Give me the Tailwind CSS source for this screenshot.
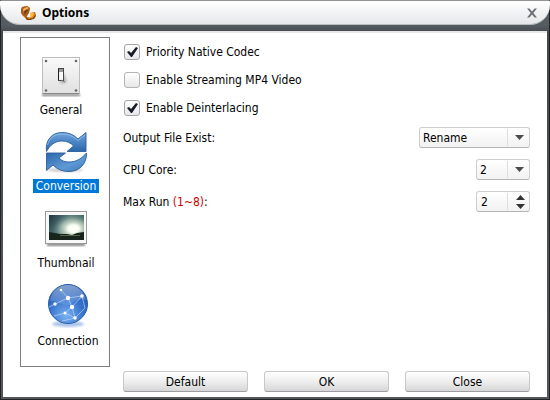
<!DOCTYPE html>
<html lang="en">
<head>
<meta charset="utf-8">
<title>Options</title>
<script src="https://cdn.jsdelivr.net/npm/@tailwindcss/browser@4"></script>
</head>
<body class="font-['DejaVu_Sans_Condensed','Noto_Sans',sans-serif] text-xs leading-4 text-black">
<div class="flex min-h-screen flex-col border-x border-t border-b border-x-[#232427] border-t-[#929292] border-b-[#232427] bg-linear-to-b from-[#565d62] from-[24px] via-[#44494e] via-[32px] to-[#55565a] px-[2px] pb-[2px]">
  <header class="-mx-[3px] mb-[6px] flex h-6 items-center rounded-b-[20px] border-b border-[#b9bcbf] bg-linear-to-b from-white to-[#e5e7ea] pr-2 pl-5">
    <svg class="size-4" viewBox="0 0 16 16" aria-hidden="true">
      <defs><linearGradient id="gold" x1="0" y1="0" x2="1" y2="1"><stop offset="0" stop-color="#f0b45b"/><stop offset=".5" stop-color="#c66d13"/><stop offset="1" stop-color="#64300a"/></linearGradient></defs>
      <path d="M2 2 7 1l3 2-1 4-3 2 1 3 4 1 3-2-1-3 2-1 1 4-2 3-5 1-5-3-2-4Z" fill="url(#gold)"/>
      <path d="m1 4 1-2 5-1 3 2-1 5-2 3-1 1-3-1-2-3Z" fill="#a85c18"/>
      <path d="m3 4 4-2 2 1-4 2-1 3Z" fill="#f5b860"/>
      <path d="m4 6 3-1 1 1-2 1-1 3Z" fill="#6b350d"/>
      <path d="m10 8 4-1 1 3-3 4-5 1-2-2 4 0 3-2Z" fill="#e58a16"/>
      <path d="m11 8 3 0-1 3-2 1-1-1Z" fill="#ffb538"/>
      <path d="m5 12 4 2 4-1-2 2H7Z" fill="#7a400e"/>
    </svg>
    <h1 class="ml-[6px] flex-1 font-['Noto_Sans',sans-serif] font-bold">Options</h1>
    <button class="p-1" aria-label="Close window"><svg class="h-[10px] w-[12px]" viewBox="0 0 12 10"><path d="M1 .5h2.500L6 3.500 8.500.5H11L7.300 5 11 9.500H8.500L6 6.500 3.500 9.500H1L4.700 5Z" fill="#6d7176"/></svg></button>
  </header>

  <main class="flex flex-1 border-t-2 border-[#e5e7e9] bg-white pr-[17px] pb-[5px] pl-[17px]">
    <nav class="mt-1 mb-[25px] flex w-[90px] flex-none flex-col items-start border border-[#7b7d80] px-3 pt-[18px]" aria-label="Option categories">
      <button class="flex h-[75px] w-[56px] flex-col items-center">
        <svg class="h-[42px] w-10" viewBox="0 0 40 42" aria-hidden="true">
          <defs><linearGradient id="plate" x1="0" y1="0" x2="0" y2="1"><stop offset="0" stop-color="#fafafa"/><stop offset="1" stop-color="#e0e0e1"/></linearGradient><filter id="soft"><feGaussianBlur stdDeviation="1"/></filter></defs>
          <path d="M1 38h38v2H1z" fill="#777" filter="url(#soft)"/>
          <rect x="1.500" y="1.500" width="37" height="36" fill="url(#plate)" stroke="#bcbdbe"/>
          <path d="M2 37.500h36" stroke="#888"/>
          <g fill="#666"><circle cx="5" cy="5" r="1.300"/><circle cx="35" cy="5" r="1.300"/><circle cx="5" cy="34.500" r="1.300"/><circle cx="35" cy="34.500" r="1.300"/></g>
          <path d="m18 25 5-8 3 9-5 2Z" fill="#888" opacity=".5" filter="url(#soft)"/>
          <rect x="17.500" y="12.500" width="5" height="12" fill="#eee" stroke="#444"/>
          <path d="M18 13h4v3h-4z" fill="#999"/><path d="M19 16h3v8h-3z" fill="#fafafa"/><path d="M17.500 13v11" stroke="#222"/><path d="m20 24 4 2" stroke="#777"/>
        </svg>
        <span class="mt-[4px]">General</span>
      </button>
      <button class="flex h-[79px] w-[66px] flex-col items-center">
        <svg class="h-[42px] w-[44px]" viewBox="0 0 44 42" aria-hidden="true">
          <defs><linearGradient id="blue" x1="0" y1="0" x2="0" y2="1"><stop offset="0" stop-color="#72a5dc"/><stop offset=".45" stop-color="#4e88c7"/><stop offset="1" stop-color="#2b66aa"/></linearGradient><linearGradient id="blueLow" x1="0" y1="0" x2="1" y2="1"><stop offset="0" stop-color="#2b66aa"/><stop offset=".6" stop-color="#5f99d5"/><stop offset="1" stop-color="#3d78bb"/></linearGradient></defs>
          <ellipse cx="21" cy="39" rx="18" ry="2" fill="#888" opacity=".4" filter="url(#soft)"/>
          <path d="M2.500 20.500C1 9 8 1.500 18 1.500c7 0 12 2.500 16 6.500l8-6.500v19H23l6.500-5.500C27 12 23 10 18 10c-7 0-12 4-15.500 10.500Z" fill="url(#blue)" stroke="#2a5e9d" stroke-width=".9"/>
          <path d="M2.500 22h19L15 27c3 3 6 4 10 4 8 0 13-4 17.500-9C43 33 35 40.500 25 40.500c-7 0-12-2.500-16-6.500l-6.500 5.500Z" fill="url(#blueLow)" stroke="#2a5e9d" stroke-width=".9"/>
          <path d="M3.500 14C6 6 11 3 18 3c6 0 11 2 16 6.500L41 4" fill="none" stroke="#9fc8f0" opacity=".7"/>
        </svg>
        <span class="mt-[6px] bg-[#0078d7] px-[3px] leading-[14px] text-white">Conversion</span>
      </button>
      <button class="flex h-[73px] w-[66px] flex-col items-center">
        <svg class="h-[38px] w-[44px]" viewBox="0 0 44 38" aria-hidden="true">
          <defs><linearGradient id="sky" x1="0" y1="0" x2="1" y2=".5"><stop offset="0" stop-color="#1d353f"/><stop offset=".5" stop-color="#567c7e"/><stop offset="1" stop-color="#385d5a"/></linearGradient><radialGradient id="sun" cx=".7" cy=".55" r=".6"><stop offset="0" stop-color="#fff"/><stop offset=".25" stop-color="#fafff0"/><stop offset=".6" stop-color="#bed1bd" stop-opacity=".65"/><stop offset="1" stop-color="#66827e" stop-opacity="0"/></radialGradient></defs>
          <path d="M3 33h38v3H3z" fill="#555" opacity=".7" filter="url(#soft)"/>
          <rect x="1.500" y="1.500" width="41" height="32" fill="#f8f8f8" stroke="#999"/>
          <path d="M5 5h35v25H5z" fill="url(#sky)"/><path d="M5 5h35v25H5z" fill="url(#sun)"/>
          <path d="m5 22 6 1 5 1 7 0 5 1 5-2 7-1v8H5Z" fill="#17251d"/><path d="M16 25h20v1H16z" fill="#52634a"/>
        </svg>
        <span class="mt-[7px]">Thumbnail</span>
      </button>
      <button class="flex w-[70px] flex-col items-center">
        <svg class="h-[46px] w-[42px]" viewBox="0 0 42 46" aria-hidden="true">
          <defs><radialGradient id="globe" cx=".45" cy=".8" r=".85"><stop offset="0" stop-color="#78b0f0"/><stop offset=".5" stop-color="#3975cf"/><stop offset="1" stop-color="#164ca0"/></radialGradient><linearGradient id="shine" x1="0" y1="0" x2="0" y2="1"><stop offset="0" stop-color="#fff" stop-opacity=".45"/><stop offset="1" stop-color="#fff" stop-opacity=".08"/></linearGradient></defs>
          <ellipse cx="21" cy="41" rx="16" ry="3" fill="#5889d2" opacity=".5" filter="url(#soft)"/>
          <circle cx="21" cy="21" r="19.500" fill="url(#globe)" stroke="#285eab"/>
          <path d="M3 18C5 7 12 2 21 2s16 6 18 15c-8-3-12 4-19 5-7 0-10-5-17-4Z" fill="url(#shine)"/>
          <path d="m14 7 7 8 14-2-10 11-7 6L7 33m14-18L8 21l-6 3m19-9 4 9 3 11-13 3m20-25 3 12-10 10M18 30l10 5" fill="none" stroke="#d8eaff" stroke-width=".8" opacity=".7"/>
          <g fill="#fff"><circle cx="14" cy="7" r="1.300"/><circle cx="21" cy="15" r="2.200"/><circle cx="35" cy="13" r="1.800"/><circle cx="8" cy="21" r="1.700"/><circle cx="25" cy="24" r="2.200"/><circle cx="18" cy="30" r="1.500"/><circle cx="28" cy="35" r="1.800"/></g>
        </svg>
        <span class="mt-[4px]">Connection</span>
      </button>
    </nav>

    <form class="ml-[13px] flex min-w-0 flex-1 flex-col">
      <div class="mt-[11px] ml-px flex flex-col items-start gap-3">
        <label class="flex items-center gap-[6px]"><span class="relative size-4"><input type="checkbox" checked class="peer block size-4 appearance-none rounded-[3px] border border-[#a4a5a8] bg-linear-to-b from-white to-[#e7e8ea]"><svg class="pointer-events-none absolute inset-0 hidden size-4 peer-checked:block" viewBox="0 0 16 16"><path d="m3 8 2-1 2 2 5-6 2 1-6 9H7Z" fill="#171b26"/></svg></span>Priority Native Codec</label>
        <label class="flex items-center gap-[6px]"><span class="relative size-4"><input type="checkbox" class="peer block size-4 appearance-none rounded-[3px] border border-[#b4b4b4] bg-linear-to-b from-white to-[#e7e7e7]"><svg class="pointer-events-none absolute inset-0 hidden size-4 peer-checked:block" viewBox="0 0 16 16"><path d="m3 8 2-1 2 2 5-6 2 1-6 9H7Z" fill="#171b26"/></svg></span>Enable Streaming MP4 Video</label>
        <label class="flex items-center gap-[6px]"><span class="relative size-4"><input type="checkbox" checked class="peer block size-4 appearance-none rounded-[3px] border border-[#a4a5a8] bg-linear-to-b from-white to-[#e7e8ea]"><svg class="pointer-events-none absolute inset-0 hidden size-4 peer-checked:block" viewBox="0 0 16 16"><path d="m3 8 2-1 2 2 5-6 2 1-6 9H7Z" fill="#171b26"/></svg></span>Enable Deinterlacing</label>
      </div>
      <div class="mt-[11px] flex flex-col gap-[11px]">
        <div class="flex h-[21px] items-center justify-between">
          <label for="exist">Output File Exist:</label>
          <div class="relative h-[21px] w-[111px]">
            <select id="exist" class="block size-full appearance-none rounded-[3px] border border-[#cecece] border-b-[#b4b4b4] bg-linear-to-b from-white to-[#f2f2f2] pl-[3px] leading-4"><option>Rename</option><option>Overwrite</option></select>
            <span class="pointer-events-none absolute inset-y-0.5 right-0 flex w-[23px] items-center justify-center border-l border-[#ddd]"><svg class="h-[5px] w-[9px]" viewBox="0 0 9 5"><path d="M0 0h9L4.500 5Z" fill="#4b4b4b"/></svg></span>
          </div>
        </div>
        <div class="flex h-[21px] items-center justify-between">
          <label for="cores">CPU Core:</label>
          <div class="relative h-[21px] w-[54px]">
            <select id="cores" class="block size-full appearance-none rounded-[3px] border border-[#cecece] border-b-[#b4b4b4] bg-linear-to-b from-white to-[#f2f2f2] pl-[3px] leading-4"><option>1</option><option selected>2</option></select>
            <span class="pointer-events-none absolute inset-y-0.5 right-0 flex w-[23px] items-center justify-center border-l border-[#ddd]"><svg class="h-[5px] w-[9px]" viewBox="0 0 9 5"><path d="M0 0h9L4.500 5Z" fill="#4b4b4b"/></svg></span>
          </div>
        </div>
        <div class="flex h-[21px] items-center justify-between">
          <label for="runs">Max Run <span class="text-[#d20000]">(1~8)</span>:</label>
          <div class="flex h-[21px] w-[54px] rounded-[3px] border border-[#cecece] border-b-[#b4b4b4] bg-linear-to-b from-white to-[#f2f2f2]">
            <input id="runs" type="text" inputmode="numeric" value="2" class="min-w-0 flex-1 bg-transparent pl-1 leading-4">
            <span class="my-px flex w-[22px] flex-col items-center justify-center gap-1 border-l border-[#ddd] pl-1">
              <button type="button" aria-label="Increase runs"><svg class="block h-[5px] w-[9px]" viewBox="0 0 9 5"><path d="M0 5h9L4.500 0Z" fill="#333"/></svg></button>
              <button type="button" aria-label="Decrease runs"><svg class="block h-[5px] w-[9px]" viewBox="0 0 9 5"><path d="M0 0h9L4.500 5Z" fill="#333"/></svg></button>
            </span>
          </div>
        </div>
      </div>
      <div class="mt-auto flex gap-4">
        <button type="button" class="h-[21px] flex-1 rounded-[3px] border border-[#c8c8c8] border-b-[#9c9ea2] bg-linear-to-b from-white via-[#eee] to-[#d6d6d8]">Default</button>
        <button type="button" class="h-[21px] flex-1 rounded-[3px] border border-[#c8c8c8] border-b-[#9c9ea2] bg-linear-to-b from-white via-[#eee] to-[#d6d6d8]">OK</button>
        <button type="button" class="h-[21px] flex-1 rounded-[3px] border border-[#c8c8c8] border-b-[#9c9ea2] bg-linear-to-b from-white via-[#eee] to-[#d6d6d8]">Close</button>
      </div>
    </form>
  </main>
</div>
</body>
</html>
